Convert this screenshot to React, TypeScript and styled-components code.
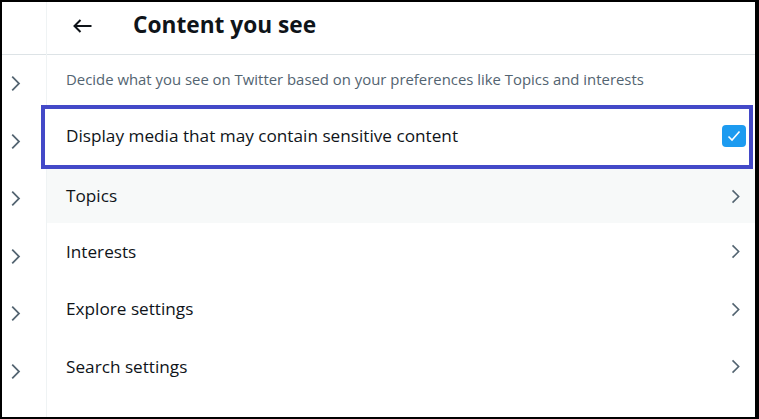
import styled, { createGlobalStyle } from "styled-components";

const GlobalStyle = createGlobalStyle`
  html, body {
    margin: 0;
    padding: 0;
    background: #fff;
  }
  body {
    font-family: "Open Sans", "Liberation Sans", sans-serif;
    color: #0f1419;
  }
`;

const Chevron = ({ size }: { size: number }) => (
  <svg width={size} height={size} viewBox="0 0 24 24" fill="#536471">
    <path d="M14.586 12L7.543 4.96l1.414-1.42L17.414 12l-8.457 8.46-1.414-1.42L14.586 12z" />
  </svg>
);

const BackArrow = () => (
  <svg width="20" height="20" viewBox="0 0 20 20" fill="none" stroke="#0f1419" strokeWidth="2">
    <path d="M1.5 10h17" />
    <path d="M7.5 4l-6 6 6 6" />
  </svg>
);

const Check = () => (
  <svg width="16" height="16" viewBox="0 0 16 16" fill="none" stroke="#fff" strokeWidth="1.6">
    <path d="M2.5 8.5l3.5 3.5 7.5-8.5" />
  </svg>
);

const navItems = ["Topics", "Interests", "Explore settings", "Search settings"];

const App: React.FC = () => {
  return (
    <>
      <GlobalStyle />
      <Frame>
        <Sidebar>
          <SidebarHeader />
          {Array.from({ length: 6 }).map((_, i) => (
            <SidebarItem key={i}>
              <Chevron size={21} />
            </SidebarItem>
          ))}
        </Sidebar>
        <Main>
          <Header>
            <BackButton>
              <BackArrow />
            </BackButton>
            <Title>Content you see</Title>
          </Header>
          <Description>
            Decide what you see on Twitter based on your preferences like Topics and interests
          </Description>
          <SensitiveRow>
            <RowLabel>Display media that may contain sensitive content</RowLabel>
            <CheckBox>
              <Check />
            </CheckBox>
          </SensitiveRow>
          {navItems.map((label, i) => (
            <NavRow key={label} $active={i === 0} $first={i === 0}>
              <RowLabel>{label}</RowLabel>
              <Chevron size={19} />
            </NavRow>
          ))}
        </Main>
      </Frame>
    </>
  );
};

const Frame = styled.div`
  width: 759px;
  height: 419px;
  box-sizing: border-box;
  border: 2px solid #000;
  border-right-width: 4px;
  display: flex;
  overflow: hidden;
`;

const Sidebar = styled.div`
  width: 44px;
  flex-shrink: 0;
  border-right: 1px solid #eff3f4;
  display: flex;
  flex-direction: column;
`;

const SidebarHeader = styled.div`
  height: 52px;
  flex-shrink: 0;
  border-bottom: 1px solid #dde3e6;
`;

const SidebarItem = styled.div`
  height: 57.5px;
  flex-shrink: 0;
  display: flex;
  align-items: center;
  padding-left: 3px;
`;

const Main = styled.div`
  flex: 1;
  position: relative;
  z-index: 1;
  display: flex;
  flex-direction: column;
`;

const Header = styled.div`
  flex-shrink: 0;
  border-bottom: 1px solid #dde3e6;
  display: flex;
  align-items: center;
  padding: 0 0 6px 26px;
  box-sizing: border-box;
  height: 53px;
`;

const BackButton = styled.div`
  width: 20px;
  height: 20px;
  display: flex;
  align-items: center;
  justify-content: center;
  margin: 2px 40px 0 0;
`;

const Title = styled.h2`
  margin: 0;
  font-size: 22.7px;
  font-weight: 700;
  line-height: 28px;
  color: #0f1419;
`;

const Description = styled.div`
  padding: 14px 19px 16px;
  font-size: 14.9px;
  line-height: 20px;
  color: #536471;
`;

const SensitiveRow = styled.div`
  height: 64px;
  box-sizing: border-box;
  margin: 0 2px 0 -6px;
  border: 4px solid #4349c8;
  display: flex;
  align-items: center;
  justify-content: space-between;
  padding: 0 3px 2px 21px;
  background: #fff;
`;

const RowLabel = styled.span`
  font-size: 17.2px;
  line-height: 24px;
  color: #0f1419;
`;

const CheckBox = styled.div`
  width: 24px;
  height: 22px;
  border-radius: 4px;
  background: #1d9bf0;
  display: flex;
  align-items: center;
  justify-content: center;
`;

const NavRow = styled.div<{ $active?: boolean; $first?: boolean }>`
  height: ${({ $first }) => ($first ? "54px" : "57.5px")};
  flex-shrink: 0;
  box-sizing: border-box;
  display: flex;
  align-items: center;
  justify-content: space-between;
  padding: 0 10px 0 19px;
  background: ${({ $active }) => ($active ? "#f7f9f9" : "#fff")};
`;

export default App;
